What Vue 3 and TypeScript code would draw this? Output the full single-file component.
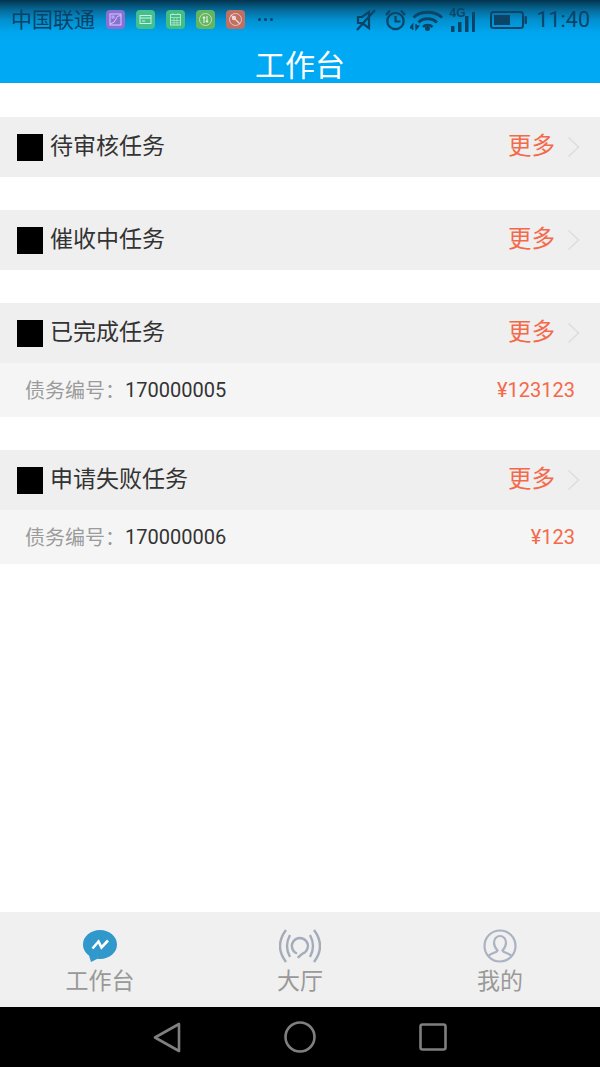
<script setup lang="ts">
interface Row { label: string; no: string; amount: string }
interface Section { title: string; row?: Row }
const sections: Section[] = [
  { title: '待审核任务' },
  { title: '催收中任务' },
  { title: '已完成任务', row: { label: '债务编号：', no: '170000005', amount: '¥123123' } },
  { title: '申请失败任务', row: { label: '债务编号：', no: '170000006', amount: '¥123' } },
]
</script>

<template>
  <div class="page">
    <header class="header">
      <div class="status">
        <span class="carrier">中国联通</span>
        <div class="apps">
          <svg class="app" viewBox="0 0 19 19"><rect width="19" height="19" rx="4" fill="#8a6fd6"/><rect x="4" y="4" width="11" height="11" fill="none" stroke="#d8d0f2" stroke-width="1"/><path d="M4 14 Q9 13 10 9 T15 6" fill="none" stroke="#d8d0f2"/><rect x="6" y="6" width="2" height="2" fill="none" stroke="#d8d0f2" stroke-width=".7"/></svg>
          <svg class="app" viewBox="0 0 19 19"><rect width="19" height="19" rx="4" fill="#42c08e"/><rect x="4" y="5.5" width="11" height="8" fill="none" stroke="#d3f0e3"/><path d="M4 8h11M6 11h3" stroke="#d3f0e3"/></svg>
          <svg class="app" viewBox="0 0 19 19"><rect width="19" height="19" rx="4" fill="#42be84"/><rect x="4.5" y="4.5" width="10" height="10.5" fill="none" stroke="#b9e8d0"/><path d="M4.5 7.5h10M4.500 10.500h10M4.500 12.800h10M8 7.500v7.500M11 7.500v7.500M7 3v2M12 3v2" stroke="#b9e8d0" stroke-width=".7"/></svg>
          <svg class="app" viewBox="0 0 19 19"><rect width="19" height="19" rx="4" fill="#63b65f"/><circle cx="9.500" cy="9.500" r="6" fill="none" stroke="#c9e8c6" stroke-width=".9"/><path d="M8 13V7M6.800 8.200 8 6.800l1.200 1.400M11 6v6M9.800 10.800 11 12.200l1.200-1.400" fill="none" stroke="#e6f5e4" stroke-width="1.100"/></svg>
          <svg class="app" viewBox="0 0 19 19"><rect width="19" height="19" rx="4" fill="#c06f63"/><circle cx="9.500" cy="9.500" r="6" fill="none" stroke="#ecc9c3" stroke-width=".9"/><circle cx="8" cy="8" r="2.200" fill="#f0d8d4"/><path d="M9.500 9.500 13 13M4.800 4.800 14 14" stroke="#f0d8d4" stroke-width="1.200"/></svg>
          <span class="dots"><i></i><i></i><i></i></span>
        </div>
        <div class="sys">
          <svg width="20" height="22" viewBox="0 0 20 22" fill="none" stroke="#0b4467" stroke-width="2.200"><path d="M2 8h4l7-5v16l-7-5H2z"/><path d="M1 21 19 1"/></svg>
          <svg class="alarm" width="21" height="22" viewBox="0 0 21 22" fill="none" stroke="#0b4467" stroke-width="2.200"><circle cx="10.500" cy="12" r="8.200"/><path d="M10.500 7V12.500H15.500M1 6 5 1.500M20 6 16 1.500"/></svg>
          <div class="wifi">
            <svg width="36" height="22" viewBox="0 0 36 22" fill="none" stroke="#0b4467" stroke-width="2.800"><path d="M3.500 8.500C10 1.500 25 1.500 32 8.500M8.500 13.500C13 8.500 22 8.500 27 13.500M13 18C15 15.500 20 15.500 22.500 18"/><circle cx="17.500" cy="19.500" r="2.500" fill="#0b4467" stroke="none"/><path d="M2.700 21v-5.500L0 19h2.700M6 15v5.500L8.700 17H6" stroke-width="1.400"/></svg>
          </div>
          <div class="signal">
            <b>4G</b>
            <svg width="26" height="20" viewBox="0 0 26 20" fill="#0b4467"><rect x="2" y="14" width="3.500" height="6"/><rect x="9" y="10" width="3.500" height="10"/><rect x="16" y="4" width="3.500" height="16"/><rect x="23" y="0" width="3.500" height="20"/></svg>
          </div>
          <svg class="battery" width="37" height="18" viewBox="0 0 37 18"><rect x="1" y="1" width="32" height="16" rx="2.500" fill="none" stroke="#0b4467" stroke-width="2"/><rect x="4" y="4" width="16" height="10" fill="#0b4467"/><rect x="34.500" y="5" width="2.500" height="8" rx="1" fill="#0b4467"/></svg>
          <span class="time">11:40</span>
        </div>
      </div>
      <h1 class="title">工作台</h1>
    </header>

    <main class="content">
      <section v-for="s in sections" :key="s.title" class="section">
        <div class="sec-head">
          <span class="square"></span>
          <span class="sec-title">{{ s.title }}</span>
          <span class="more">更多</span>
          <svg class="chev" width="13" height="22" viewBox="0 0 13 22" fill="none" stroke="#dedede" stroke-width="1.600"><path d="M1.500 1.500 11.500 11 1.500 20.500"/></svg>
        </div>
        <div v-if="s.row" class="row">
          <span class="label">{{ s.row.label }}</span>
          <span class="no">{{ s.row.no }}</span>
          <span class="amount">{{ s.row.amount }}</span>
        </div>
      </section>
    </main>

    <nav class="tabs">
      <div class="tab">
        <svg width="36" height="34" viewBox="0 0 36 34"><path d="M18 1C8.500 1 1 7.500 1 15.500 1 20 3.300 24 7 26.500L9 33 15.500 29.800C16.300 29.900 17.200 30 18 30 27.500 30 35 23.500 35 15.500S27.500 1 18 1Z" fill="#3198cc"/><path d="M10.500 19.500 16.500 12.500 19.500 18.500 26 11.500" fill="none" stroke="#fff" stroke-width="2.600"/></svg>
        <span>工作台</span>
      </div>
      <div class="tab">
        <svg width="42" height="34" viewBox="0 0 42 34" fill="none" stroke="#a4acba" stroke-width="2.400"><path d="M7 1Q-5 17 7 33M11 6Q5 17 11 28M35 1Q47 17 35 33M31 6Q37 17 31 28"/><path d="M18 24.500A8 8 0 1 1 24 24.400C22 26 20 27 19 29"/></svg>
        <span>大厅</span>
      </div>
      <div class="tab">
        <svg width="34" height="34" viewBox="0 0 34 34" fill="none" stroke="#aab3c2" stroke-width="2.200"><circle cx="17" cy="17" r="15.500"/><path d="M5.500 27C8 24 13.500 24 14.500 21.500 12 19 11 16 11 13.500 11 9.500 14 7 17 7S23 9.500 23 13.500C23 16 22 19 19.500 21.500 20.500 24 26 24 28.500 27"/></svg>
        <span>我的</span>
      </div>
    </nav>

    <footer class="nav">
      <svg width="28" height="31" viewBox="0 0 28 31" fill="none" stroke="#7f7f7f" stroke-width="2.600" stroke-linejoin="round"><path d="M26 2 2 15.500 26 29Z"/></svg>
      <svg width="32" height="32" viewBox="0 0 32 32" fill="none" stroke="#7f7f7f" stroke-width="2.600"><circle cx="16" cy="16" r="14.500"/></svg>
      <svg width="28" height="28" viewBox="0 0 28 28" fill="none" stroke="#7f7f7f" stroke-width="2.600"><rect x="1.500" y="1.500" width="25" height="25" rx="2"/></svg>
    </footer>
  </div>
</template>

<style scoped>
.page {
  width: 600px;
  height: 1067px;
  display: flex;
  flex-direction: column;
  background: #fff;
  font-family: "Noto Sans CJK SC", Roboto, sans-serif;
  overflow: hidden;
}
.header {
  height: 83px;
  background: linear-gradient(180deg, #03344d 0, #066a99 10px, #0290cf 20px, #00a5ee 32px, #00a9f4 42px);
}
.status {
  height: 39px;
  display: flex;
  align-items: center;
  padding: 0 10px 0 11px;
}
.carrier {
  font-size: 21px;
  line-height: 36px;
  height: 36px;
  margin-bottom: 3px;
  color: #0a4266;
  width: 95px;
}
.apps {
  display: flex;
  align-items: center;
  gap: 11px;
}
.app {
  width: 19px;
  height: 19px;
  display: block;
}
.dots {
  display: flex;
  gap: 3px;
  margin-left: 2px;
}
.dots i {
  width: 3px;
  height: 3px;
  border-radius: 50%;
  background: #0b4467;
}
.sys {
  margin-left: auto;
  display: flex;
  align-items: center;
  color: #0a4266;
}
.alarm { margin-left: 9px; }
.wifi {
  display: flex;
  margin-left: 4px;
  margin-right: -1px;
}
.signal {
  position: relative;
  margin-left: 4px;
  display: flex;
  height: 25px;
  align-items: flex-end;
}
.signal b {
  position: absolute;
  left: 0;
  top: 0;
  font: 700 12px/12px "Liberation Sans", sans-serif;
  color: #0b4467;
}
.battery { margin-left: 15px; }
.time {
  margin-left: 9px;
  font: 400 21.500px/24px Roboto, sans-serif;
  color: #0a4266;
}
.title {
  margin: 0;
  height: 44px;
  font-size: 30px;
  font-weight: 400;
  line-height: 48px;
  color: #fff;
  text-align: center;
}
.content {
  flex: 1;
  padding-top: 34px;
}
.section {
  margin-bottom: 33px;
}
.sec-head {
  height: 60px;
  background: #efefef;
  display: flex;
  align-items: center;
  padding: 0 20px 0 17px;
}
.square {
  width: 26px;
  height: 27px;
  background: #000;
  flex: none;
  margin-top: 1px;
}
.sec-title {
  margin-left: 7px;
  margin-bottom: 6px;
  font-size: 23px;
  color: #333;
  line-height: 30px;
}
.more {
  margin-left: auto;
  margin-bottom: 6px;
  font-size: 23.500px;
  color: #f4694a;
  line-height: 30px;
}
.chev { margin-left: 12px; }
.row {
  height: 54px;
  background: #f5f5f5;
  display: flex;
  align-items: center;
  padding: 0 25px;
  font-size: 20px;
}
.label {
  color: #9b9b9b;
  margin-bottom: 2px;
}
.no {
  color: #333;
  font-family: Roboto, sans-serif;
}
.amount {
  margin-left: auto;
  color: #f4694a;
  font-family: Roboto, sans-serif;
}
.tabs {
  height: 95px;
  background: #f0f0f0;
  display: flex;
}
.tab {
  flex: 1;
  display: flex;
  flex-direction: column;
  align-items: center;
  padding-top: 17px;
  font-size: 23px;
  line-height: 32px;
  color: #999;
}
.tab svg { display: block; }
.nav {
  height: 60px;
  background: #000;
  display: flex;
  align-items: center;
  justify-content: center;
  gap: 103px;
}
</style>

<style>
html, body { margin: 0; background: #fff; }
</style>
